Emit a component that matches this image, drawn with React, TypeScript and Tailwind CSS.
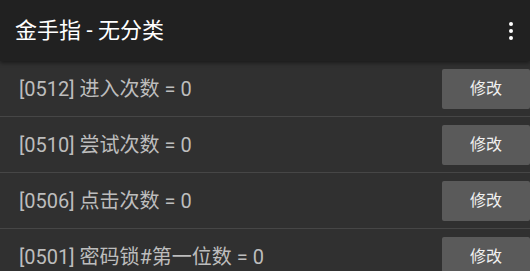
const ROWS = [
  { id: "0512", label: "进入次数", value: 0 },
  { id: "0510", label: "尝试次数", value: 0 },
  { id: "0506", label: "点击次数", value: 0 },
  { id: "0501", label: "密码锁#第一位数", value: 0 },
];

const FONT = "font-['Roboto','Noto_Sans_CJK_SC',sans-serif]";

export default function App() {
  return (
    <div className={`h-[271px] w-[530px] overflow-hidden bg-[#303030] ${FONT}`}>
      {/* Toolbar */}
      <div className="relative z-10 flex h-[61px] items-center justify-between bg-[#212121] pl-[15px] pr-[17px] shadow-[0_2px_4px_rgba(0,0,0,0.45)]">
        <h1 className="text-[22px] leading-none text-white">金手指 - 无分类</h1>
        <div className="flex flex-col items-center gap-[3px]">
          <span className="h-[4px] w-[4px] rounded-full bg-white" />
          <span className="h-[4px] w-[4px] rounded-full bg-white" />
          <span className="h-[4px] w-[4px] rounded-full bg-white" />
        </div>
      </div>

      {/* List */}
      <div className="flex flex-col">
        {ROWS.map((row, i) => (
          <div key={row.id} className={i > 0 ? "border-t border-[#464646]" : ""}>
            <div className="flex h-[55px] items-center justify-between pl-[19px]">
              <span className="text-[20px] leading-none text-[#bdbdbd]">
                [{row.id}] {row.label} = {row.value}
              </span>
              <button
                type="button"
                className="flex h-[40px] w-[88px] items-center justify-center rounded-[2px] bg-[#5a5a5a] text-[16px] text-[#f0f0f0]"
              >
                修改
              </button>
            </div>
          </div>
        ))}
      </div>
    </div>
  );
}
